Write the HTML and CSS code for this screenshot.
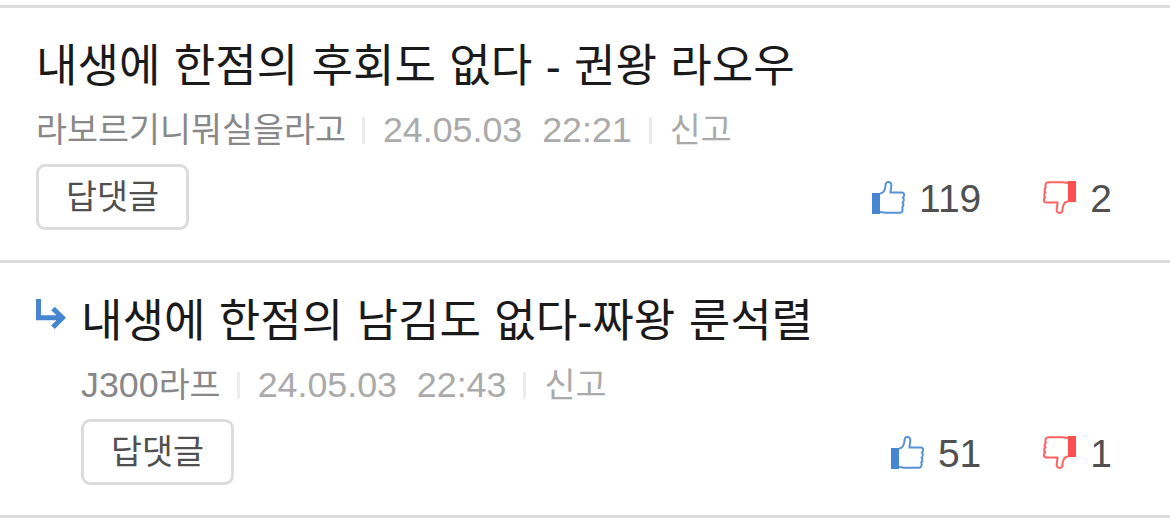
FILE: index.html
```html
<!DOCTYPE html>
<html lang="ko">
<head>
    <meta charset="UTF-8">
    <meta name="viewport" content="width=device-width, initial-scale=1.0">
    <title>댓글</title>
    <link rel="stylesheet" href="styles.css">
</head>
<body>
    <svg class="defs" width="0" height="0">
        <symbol id="thumb" viewBox="0 0 33 33">
            <path d="M0 12h8v21H0z" fill="currentColor"/>
            <path d="M8 12.500C10.500 12.500 11.500 11.500 12.500 9C13.500 6.500 13.400 5 13.700 3.200C14 1.600 15 1 16.300 1C18.500 1 19.500 2.500 19.300 4.800C19.200 7.200 18.500 9 18.500 11.500H29.500C31.500 11.500 32.200 12.600 32.100 14C32 15.500 31.600 16.300 31 16.700C32.200 18 32 20.500 30.600 21.700C31.600 23 31.400 25.200 30.200 26.500C31 28.500 30.600 31.800 28 31.800H14.500C12 31.800 11 31 8 31" fill="none" stroke="currentColor" stroke-width="2" stroke-opacity=".9"/>
        </symbol>
    </svg>

    <ul class="comments">
        <li class="comment">
            <div class="body">
                <p class="text">내생에 한점의 후회도 없다 - 권왕 라오우</p>
                <div class="meta">
                    <span class="name">라보르기니뭐실을라고</span>
                    <span class="date">24.05.03&nbsp; 22:21</span>
                    <a class="report">신고</a>
                </div>
                <div class="actions">
                    <button class="reply-btn">답댓글</button>
                    <div class="votes">
                        <span class="vote up"><svg><use href="#thumb"/></svg><span class="count">119</span></span>
                        <span class="vote down"><svg><use href="#thumb"/></svg><span class="count">2</span></span>
                    </div>
                </div>
            </div>
        </li>
        <li class="comment">
            <svg class="arrow" viewBox="0 0 30 31">
                <path d="M2.500 0V18.800H27M17 9.500L26.500 18.800L17 28.200" fill="none" stroke="#4585d2" stroke-width="5"/>
            </svg>
            <div class="body">
                <p class="text">내생에 한점의 남김도 없다-짜왕 룬석렬</p>
                <div class="meta">
                    <span class="name"><span class="latin">J300</span>라프</span>
                    <span class="date">24.05.03&nbsp; 22:43</span>
                    <a class="report">신고</a>
                </div>
                <div class="actions">
                    <button class="reply-btn">답댓글</button>
                    <div class="votes">
                        <span class="vote up"><svg><use href="#thumb"/></svg><span class="count">51</span></span>
                        <span class="vote down"><svg><use href="#thumb"/></svg><span class="count">1</span></span>
                    </div>
                </div>
            </div>
        </li>
    </ul>
</body>
</html>
```
FILE: styles.css
```css
body {
    margin: 0;
    padding-top: 5px;
    background-color: #fff;
    font-family: "Liberation Sans", "Noto Sans CJK KR", sans-serif;
}

.defs {
    display: block;
}

.comments {
    list-style: none;
    margin: 0;
    padding: 0;
    border-bottom: 3px solid #dcdcdc;
}

.comment {
    display: flex;
    box-sizing: border-box;
    height: 255px;
    padding: 26px 58px 30px 36px;
    border-top: 3px solid #dcdcdc;
}

.body {
    flex: 1;
}

.arrow {
    width: 30px;
    height: 31px;
    margin: 10px 15px 0 0;
}

.text {
    margin: 0;
    height: 69px;
    line-height: 66px;
    font-size: 45.1px;
    word-spacing: 0.8px;
    color: #1a1a1a;
    white-space: nowrap;
}

.meta {
    display: flex;
    align-items: center;
    height: 54px;
    padding-bottom: 7px;
    font-size: 33.7px;
    line-height: 56px;
    color: #aaa;
    white-space: nowrap;
}

.name {
    color: #888;
}

.latin,
.date {
    font-size: 35.8px;
}

.date,
.report {
    display: flex;
    align-items: center;
}

.date::before,
.report::before {
    content: "";
    width: 3px;
    height: 27px;
    margin: 0 18px 0 16px;
    background-color: #ececec;
}

.report::before {
    margin-left: 17px;
}

.actions {
    display: flex;
    justify-content: space-between;
}

.reply-btn {
    width: 153px;
    height: 66px;
    padding: 0;
    border: 3px solid #dcdcdc;
    border-radius: 9px;
    background-color: #fff;
    font-family: inherit;
    font-size: 33.7px;
    line-height: 60px;
    color: #505050;
}

.votes {
    display: flex;
    gap: 62px;
    height: 66px;
}

.vote {
    display: flex;
    align-items: center;
    gap: 14px;
    font-size: 39px;
    color: #505050;
}

.count {
    padding-top: 3px;
}

.vote svg {
    width: 33px;
    height: 33px;
}

.up svg {
    color: #4585d2;
}

.down svg {
    color: #ff5050;
    transform: rotate(180deg);
}
```
